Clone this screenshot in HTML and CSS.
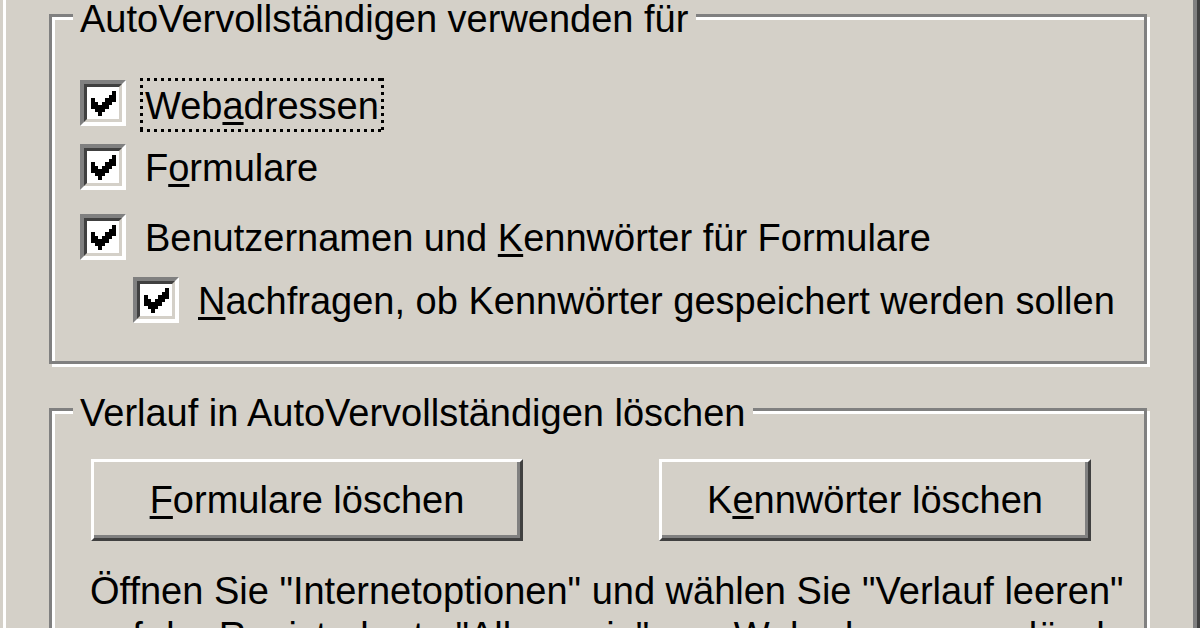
FILE: index.html
```html
<!DOCTYPE html>
<html lang="de">
<head>
<meta charset="utf-8">
<title>AutoVervollständigen-Einstellungen</title>
<link rel="stylesheet" href="styles.css">
</head>
<body>
<div class="page">
  <div class="group g1">
    <div class="gtitle">AutoVervollständigen verwenden für</div>
    <div class="opt r1">
      <span class="cb"><span class="cbi"><svg class="chk" viewBox="0 0 7 7"><polygon points="6,0 7,0 7,3 6,3 6,4 5,4 5,5 4,5 4,6 3,6 3,7 2,7 2,6 1,6 1,5 0,5 0,2 1,2 1,3 2,3 2,4 3,4 3,3 4,3 4,2 5,2 5,1 6,1"/></svg></span></span>
      <span class="lbl focus">Web<u>a</u>dressen</span>
    </div>
    <div class="opt r2">
      <span class="cb"><span class="cbi"><svg class="chk" viewBox="0 0 7 7"><polygon points="6,0 7,0 7,3 6,3 6,4 5,4 5,5 4,5 4,6 3,6 3,7 2,7 2,6 1,6 1,5 0,5 0,2 1,2 1,3 2,3 2,4 3,4 3,3 4,3 4,2 5,2 5,1 6,1"/></svg></span></span>
      <span class="lbl">F<u>o</u>rmulare</span>
    </div>
    <div class="opt r3">
      <span class="cb"><span class="cbi"><svg class="chk" viewBox="0 0 7 7"><polygon points="6,0 7,0 7,3 6,3 6,4 5,4 5,5 4,5 4,6 3,6 3,7 2,7 2,6 1,6 1,5 0,5 0,2 1,2 1,3 2,3 2,4 3,4 3,3 4,3 4,2 5,2 5,1 6,1"/></svg></span></span>
      <span class="lbl">Benutzernamen und <u>K</u>ennwörter für Formulare</span>
    </div>
    <div class="opt r4">
      <span class="cb"><span class="cbi"><svg class="chk" viewBox="0 0 7 7"><polygon points="6,0 7,0 7,3 6,3 6,4 5,4 5,5 4,5 4,6 3,6 3,7 2,7 2,6 1,6 1,5 0,5 0,2 1,2 1,3 2,3 2,4 3,4 3,3 4,3 4,2 5,2 5,1 6,1"/></svg></span></span>
      <span class="lbl"><u>N</u>achfragen, ob Kennwörter gespeichert werden sollen</span>
    </div>
  </div>
  <div class="group g2">
    <div class="gtitle">Verlauf in AutoVervollständigen löschen</div>
    <div class="btns">
      <div class="btn"><span><u>F</u>ormulare löschen</span></div>
      <div class="btn"><span>K<u>e</u>nnwörter löschen</span></div>
    </div>
    <p class="note">Öffnen Sie "Internetoptionen" und wählen Sie "Verlauf leeren"<br>auf der Registerkarte "Allgemein", um Webadressen zu löschen.</p>
  </div>
</div>
</body>
</html>
```
FILE: styles.css
```css
html, body {
  margin: 0;
  padding: 0;
}
body {
  width: 1200px;
  height: 628px;
  overflow: hidden;
  background: #d4d0c8;
  color: #000;
  font-family: "Liberation Sans", Arial, sans-serif;
  font-size: 38px;
  line-height: 44px;
}
.page {
  margin-left: 3px;
  height: 700px;
  box-sizing: border-box;
  padding-top: 14px;
  border-left: 3px solid #fff;
  border-right: 3px solid #404040;
  box-shadow: inset -4px 0 0 #808080;
}
.group {
  margin-left: 43px;
  width: 1098px;
  box-sizing: border-box;
  border: 3px solid #808080;
  box-shadow: inset 3px 3px 0 #fff, 3px 3px 0 #fff;
}
.g1 {
  height: 350px;
}
.g2 {
  margin-top: 44px;
  height: 420px;
}
.gtitle {
  width: fit-content;
  margin: -20px 0 0 21px;
  padding: 0 8px 0 7px;
  background: #d4d0c8;
  white-space: nowrap;
}
.opt {
  display: flex;
  align-items: flex-start;
  margin-left: 28px;
}
.r1 { margin-top: 39px; }
.r2 { margin-top: 12px; }
.r3 { margin-top: 24px; }
.r4 { margin-top: 17px; margin-left: 81px; }
.cb {
  flex: none;
  width: 46px;
  height: 46px;
  box-sizing: border-box;
  border: 4px solid;
  border-color: #808080 #fff #fff #808080;
}
.cbi {
  display: flex;
  align-items: center;
  justify-content: center;
  height: 100%;
  box-sizing: border-box;
  border: 3px solid;
  border-color: #404040 #d4d0c8 #d4d0c8 #404040;
  background: #fff;
}
.chk {
  width: 25px;
  height: 25px;
  fill: #000;
  shape-rendering: crispEdges;
}
.lbl {
  margin: 2px 0 0 19px;
  white-space: nowrap;
}
.focus {
  margin: -2px 0 0 14px;
  padding: 6px 5px 4px 5px;
  background-image:
    linear-gradient(90deg, #000 50%, transparent 50%),
    linear-gradient(90deg, #000 50%, transparent 50%),
    linear-gradient(#000 50%, transparent 50%),
    linear-gradient(#000 50%, transparent 50%);
  background-size: 7px 3px, 7px 3px, 3px 7px, 3px 7px;
  background-position: 0 0, 0 100%, 0 0, 100% 0;
  background-repeat: repeat-x, repeat-x, repeat-y, repeat-y;
}
u {
  text-decoration-thickness: 3px;
  text-underline-offset: 3px;
}
.btns {
  display: flex;
  gap: 136px;
  margin: 24px 0 0 39px;
}
.btn {
  display: flex;
  align-items: center;
  justify-content: center;
  width: 432px;
  height: 82px;
  box-sizing: border-box;
  border: 3px solid;
  border-color: #fff #404040 #404040 #fff;
  box-shadow: inset -3px -3px 0 #808080;
  white-space: nowrap;
}
.note {
  margin: 28px 0 0 38px;
  line-height: 45px;
  white-space: nowrap;
}
```
